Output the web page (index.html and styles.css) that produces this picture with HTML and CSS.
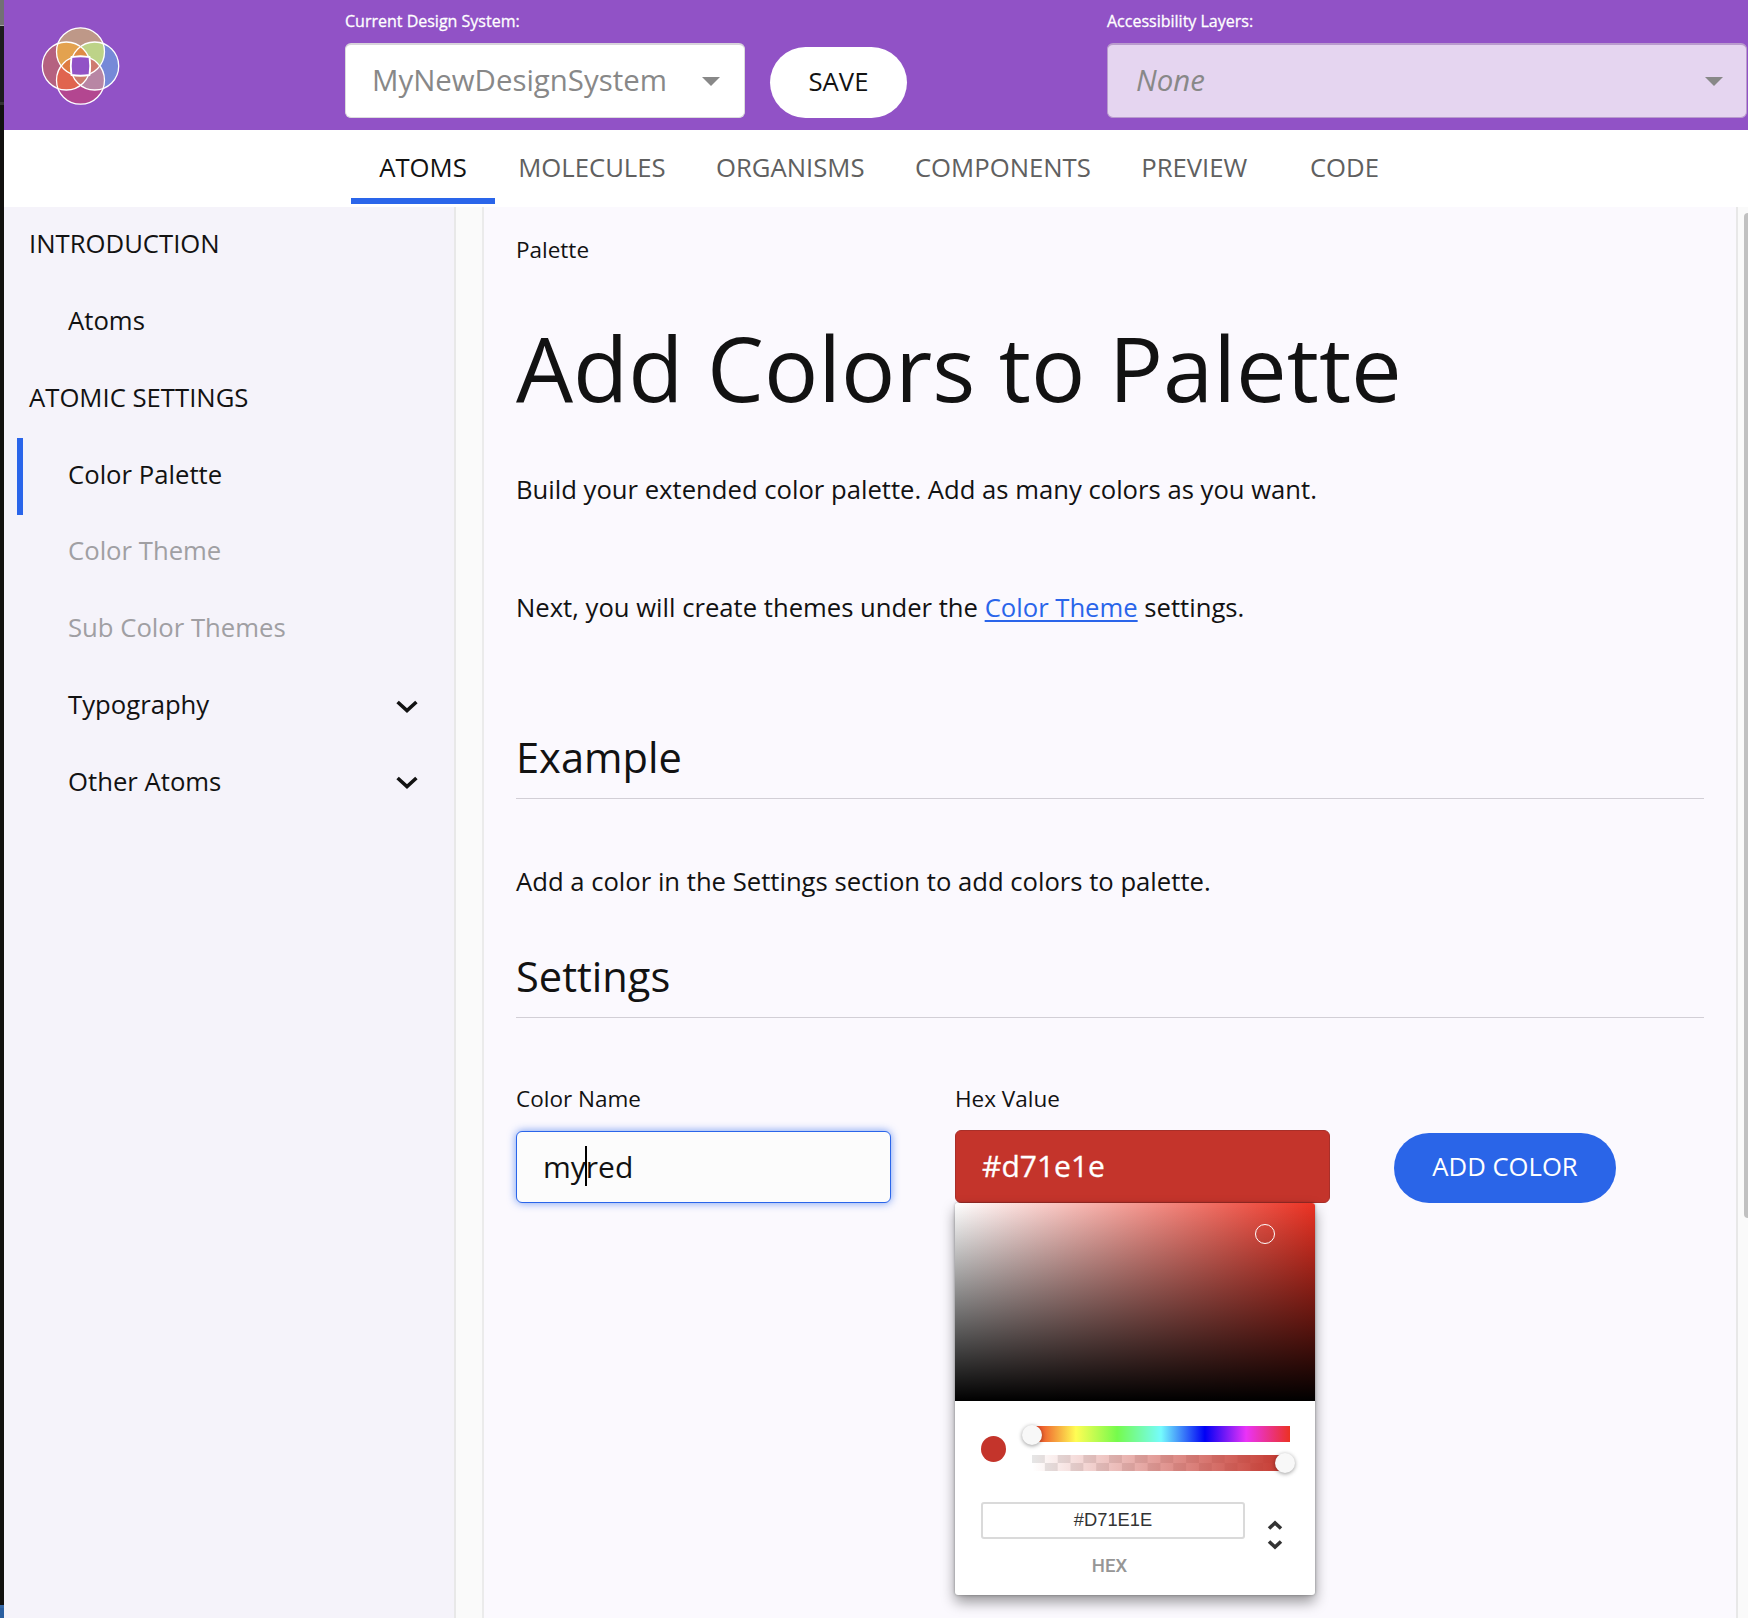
FILE: index.html
```html
<!DOCTYPE html>
<html lang="en">
<head>
<meta charset="utf-8">
<title>Color Palette</title>
<link rel="stylesheet" href="styles.css">
</head>
<body>
<div class="window">
  <div class="window-edge"><span class="edge-top"></span><span class="edge-upper"></span><span class="edge-body"></span><span class="edge-bottom"></span></div>
  <div class="app">
    <header class="header">
      <svg class="logo" width="80" height="80" viewBox="0 0 80 80">
        <defs>
          <clipPath id="cl"><circle cx="26.3" cy="40" r="24"/></clipPath>
          <clipPath id="cr"><circle cx="54.7" cy="40" r="24"/></clipPath>
          <clipPath id="ct"><circle cx="40.5" cy="25.8" r="24"/></clipPath>
          <clipPath id="cb"><circle cx="40.5" cy="54.2" r="24"/></clipPath>
        </defs>
        <circle cx="40.5" cy="25.8" r="24" fill="#be9888"/>
        <circle cx="26.3" cy="40" r="24" fill="#b56180"/>
        <circle cx="54.7" cy="40" r="24" fill="#7689d8"/>
        <circle cx="40.5" cy="54.2" r="24" fill="#b34690"/>
        <circle cx="40.5" cy="25.8" r="24" fill="#e3a24f" clip-path="url(#cl)"/>
        <circle cx="40.5" cy="25.8" r="24" fill="#bdd388" clip-path="url(#cr)"/>
        <circle cx="40.5" cy="54.2" r="24" fill="#e0644f" clip-path="url(#cl)"/>
        <circle cx="40.5" cy="54.2" r="24" fill="#b886a4" clip-path="url(#cr)"/>
        <g clip-path="url(#cl)"><circle cx="54.7" cy="40" r="24" fill="#de8b46" clip-path="url(#ct)"/></g>
        <g clip-path="url(#cl)"><circle cx="54.7" cy="40" r="24" fill="#cc7b6c" clip-path="url(#cb)"/></g>
        <g clip-path="url(#ct)"><circle cx="26.3" cy="40" r="24" fill="#de7a40" clip-path="url(#cb)"/></g>
        <g clip-path="url(#ct)"><circle cx="54.7" cy="40" r="24" fill="#cf7a70" clip-path="url(#cb)"/></g>
        <g fill="none" stroke="#fff" stroke-width="1.3">
          <circle cx="40.5" cy="25.8" r="24"/><circle cx="26.3" cy="40" r="24"/>
          <circle cx="54.7" cy="40" r="24"/><circle cx="40.5" cy="54.2" r="24"/>
        </g>
        <path d="M31.5 31Q40.5 29.6 49.5 31Q50.9 40 49.5 49Q40.5 50.4 31.5 49Q30.1 40 31.5 31Z" fill="#9152c6" stroke="#fff" stroke-width="1.8"/>
      </svg>
      <div class="field-group design-system">
        <label class="header-label">Current Design System:</label>
        <div class="select"><span>MyNewDesignSystem</span><i class="caret"></i></div>
      </div>
      <button class="pill save">SAVE</button>
      <div class="field-group layers">
        <label class="header-label">Accessibility Layers:</label>
        <div class="select disabled"><span>None</span><i class="caret"></i></div>
      </div>
    </header>
    <nav class="tabs">
      <a class="tab active">ATOMS</a><a class="tab">MOLECULES</a><a class="tab">ORGANISMS</a><a class="tab">COMPONENTS</a><a class="tab">PREVIEW</a><a class="tab">CODE</a>
    </nav>
    <div class="body">
      <aside class="sidebar">
        <div class="side-title">INTRODUCTION</div>
        <div class="side-item">Atoms</div>
        <div class="side-title">ATOMIC SETTINGS</div>
        <div class="side-item current">Color Palette</div>
        <div class="side-item muted">Color Theme</div>
        <div class="side-item muted">Sub Color Themes</div>
        <div class="side-item">Typography<svg class="chevron" width="22" height="14" viewBox="0 0 22 14"><path d="M1.6 2L11 10.6L20.4 2"/></svg></div>
        <div class="side-item">Other Atoms<svg class="chevron" width="22" height="14" viewBox="0 0 22 14"><path d="M1.6 2L11 10.6L20.4 2"/></svg></div>
      </aside>
      <div class="gutter"></div>
      <main class="content">
        <div class="breadcrumb">Palette</div>
        <h1>Add Colors to Palette</h1>
        <p class="intro">Build your extended color palette. Add as many colors as you want.</p>
        <p class="next">Next, you will create themes under the <a class="link">Color Theme</a> settings.</p>
        <h2>Example</h2>
        <p class="hint">Add a color in the Settings section to add colors to palette.</p>
        <h2>Settings</h2>
        <div class="form">
          <div class="field">
            <label>Color Name</label>
            <div class="input focused">my<i class="text-cursor"></i>red</div>
          </div>
          <div class="field">
            <label>Hex Value</label>
            <div class="input hex">#d71e1e</div>
            <div class="picker">
              <div class="saturation"><i class="ring"></i></div>
              <div class="sliders">
                <div class="swatch"></div>
                <div class="tracks">
                  <div class="track hue"><i class="knob"></i></div>
                  <div class="track alpha"><i class="knob"></i></div>
                </div>
              </div>
              <div class="hex-row">
                <div class="hex-field">
                  <div class="hex-input">#D71E1E</div>
                  <div class="hex-label">HEX</div>
                </div>
                <svg class="arrows" width="16" height="30" viewBox="0 0 16 30"><path d="M2 8.5L8 3L14 8.5M2 21.5L8 27L14 21.5"/></svg>
              </div>
            </div>
          </div>
          <button class="pill add">ADD COLOR</button>
        </div>
      </main>
      <div class="scrollbar"><div class="thumb"></div></div>
    </div>
  </div>
</div>
</body>
</html>
```

FILE: styles.css
```css
* { box-sizing: border-box; }
body {
  margin: 0;
  height: 1618px;
  overflow: hidden;
  font-family: "Open Sans", "Noto Sans", sans-serif;
  font-size: 25.7px;
  color: #121212;
}
h1, h2, p { margin: 0; font-weight: 400; }
button { font: inherit; border: 0; padding: 0; }

.window { display: flex; height: 1618px; }
.window-edge { width: 4px; display: flex; flex-direction: column; }
.edge-top { height: 26px; background: #727074; border-bottom: 1px solid #a5a4a6; }
.edge-upper { height: 79px; background: #1d1c1e; border-bottom: 3px solid #333; }
.edge-body { flex: 1; background: #12110f; }
.edge-bottom { height: 13px; background: #2b5fa0; border-top: 3px solid #3768a6; }
.app { flex: 1; display: flex; flex-direction: column; min-width: 0; }

.header { height: 130px; background: #9152c6; display: flex; align-items: flex-start; }
.logo { margin: 25.5px 0 0 35.5px; flex: none; }
.field-group { display: flex; flex-direction: column; flex: none; }
.design-system { margin-left: 225.5px; width: 400px; }
.layers { margin-left: 200px; width: 640px; }
.header-label { height: 43px; padding-top: 10px; line-height: 22px; font-size: 16px; color: #fff; -webkit-text-stroke: 0.3px #fff; }
.select {
  height: 75px;
  padding: 0 24px 2px 26px;
  display: flex;
  align-items: center;
  justify-content: space-between;
  background: #fff;
  border: 1px solid #dcdcdc;
  border-top: 2px solid #d8d4da;
  border-radius: 6px;
  font-size: 29.4px;
  color: #888;
}
.select.disabled { background: #e5d5f0; border-color: #b99bcd; font-style: italic; padding: 0 23px 2px 28px; }
.caret { border: 9px solid transparent; border-top: 9px solid #888; border-bottom: 0; margin-top: 2px; }
.pill { border-radius: 36px; }
.save { margin: 47px 0 0 25px; width: 137px; height: 71px; padding-bottom: 3px; background: #fff; color: #121212; flex: none; }

.tabs { height: 77px; padding-left: 347px; display: flex; background: #fff; color: #606060; }
.tab { height: 74px; min-width: 144px; padding: 18px 25.2px 0; line-height: 40px; text-align: center; border-bottom: 6px solid transparent; }
.tab.active { color: #121212; border-color: #2a65ea; margin-right: -2px; }

.body { flex: 1; display: flex; min-height: 0; }
.sidebar { width: 452px; background: #f5f3fa; border-right: 2px solid #e8e8e8; padding: 0.4px 36px 0 13px; }
.side-title, .side-item { height: 76.8px; padding-bottom: 4px; display: flex; align-items: center; }
.side-title { padding-left: 12px; }
.side-item { padding-left: 51px; justify-content: space-between; position: relative; }
.side-item.current { border-left: 6px solid #2a65ea; padding-left: 45px; }
.muted { color: #a09fa3; }
.chevron { margin-top: 4px; fill: none; stroke: #121212; stroke-width: 3.6; }
.gutter { width: 28px; background: #fafafa; border-right: 2px solid #ebebeb; }

.content { width: 1252px; padding: 28px 32px 0 32px; background: #fbf9fe; font-size: 25.65px; }
.breadcrumb { height: 30px; line-height: 30px; font-size: 22.5px; }
h1 { margin-top: 47px; height: 110px; line-height: 110px; font-size: 90.3px; }
p { height: 40px; line-height: 40px; }
.intro { margin-top: 48px; }
.next { margin-top: 78px; }
.link { color: #2a65ea; text-decoration: underline; text-decoration-thickness: 2px; text-underline-offset: 3px; }
h2 { height: 71px; line-height: 59px; font-size: 41.6px; border-bottom: 1px solid #d2cfd6; }
.next + h2 { margin-top: 100px; }
.hint { margin-top: 63px; }
.hint + h2 { margin-top: 45px; }

.form { margin-top: 66px; display: flex; align-items: flex-start; }
.field { width: 375px; margin-right: 64px; position: relative; }
.field label { display: block; height: 46px; line-height: 30px; font-size: 22.5px; }
.input { height: 73px; border-radius: 6px; padding: 0 26px 2px; display: flex; align-items: center; font-size: 30px; }
.input.focused { margin-top: 1px; height: 72px; border: 1px solid #2a65ea; background: #fcfcfc; box-shadow: 0 0 8px rgba(42, 101, 234, 0.65); }
.text-cursor { width: 2px; height: 40px; margin: 0 -1px; background: #000; }
.input.hex { background: #c4342b; border: 1px solid #a82f29; color: #fff; -webkit-text-stroke: 0.3px #fff; }
.add { margin-top: 49px; width: 222px; height: 70px; padding-bottom: 3px; background: #2a65e8; color: #fff; }

.picker {
  position: absolute;
  top: 119px;
  left: 0;
  width: 360px;
  height: 392px;
  background: #fff;
  border-radius: 3px;
  box-shadow: 0 0 3px rgba(0, 0, 0, 0.35), 0 7px 14px rgba(0, 0, 0, 0.4);
}
.saturation {
  position: relative;
  height: 198px;
  border-radius: 3px 3px 0 0;
  background: linear-gradient(to top, #000, transparent), linear-gradient(to right, #fff, #eb3223);
}
.ring { position: absolute; left: 300px; top: 21px; width: 20px; height: 20px; border: 1.6px solid #fff; border-radius: 50%; }
.sliders { padding: 25px 25px 0 26px; display: flex; }
.swatch { width: 25px; height: 26px; margin-top: 10px; border-radius: 50%; background: #c4342b; }
.tracks { flex: 1; margin-left: 26px; }
.track { position: relative; height: 16px; }
.hue { background: linear-gradient(to right, #eb3223 0%, #fffd54 17%, #75fb4c 33%, #75fbfd 50%, #0000f5 67%, #ea33f7 83%, #eb3223 100%); }
.alpha {
  margin-top: 13px;
  background: linear-gradient(to right, rgba(196, 52, 43, 0), #c4342b), repeating-conic-gradient(#fff 0 25%, #e6e6e6 0 50%) 0 0 / 25.7px 16px;
}
.knob { position: absolute; top: -1.5px; width: 20px; height: 20px; border-radius: 50%; background: #f8f8f8; box-shadow: 0 1px 4px rgba(0, 0, 0, 0.4); }
.hue .knob { left: -10px; }
.alpha .knob { right: -5px; top: -2px; }
.hex-row { padding: 31px 32px 0 26px; display: flex; justify-content: space-between; }
.hex-field { width: 264px; }
.hex-input { height: 37px; line-height: 32px; border: 2px solid #dadada; border-radius: 3px; text-align: center; font-family: "Liberation Sans", Arial, sans-serif; font-size: 18.3px; color: #333; }
.hex-label { margin-top: 15px; padding-right: 7px; line-height: 24px; text-align: center; font-family: Roboto, sans-serif; font-size: 18.5px; font-weight: 500; color: #969696; transform: none; }
.arrows { margin-top: 18px; fill: none; stroke: #333; stroke-width: 3.6; }

.scrollbar { width: 12px; flex: none; display: flex; justify-content: flex-end; background: #fafafa; border-left: 2px solid #e8e8e8; overflow: hidden; }
.thumb { width: 4px; height: 1005px; margin-top: 6px; background: #c1c1c1; border-radius: 6px 0 0 6px; }
```
